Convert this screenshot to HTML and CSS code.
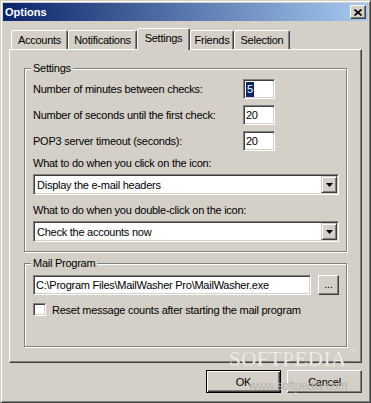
FILE: index.html
```html
<!DOCTYPE html>
<html lang="en">
<head>
  <meta charset="UTF-8" />
  <title>Options</title>
  <link rel="stylesheet" href="styles.css">
</head>
<body>
  <div class="window">
    <div class="titlebar">
      <span class="title">Options</span>
      <span class="close">
        <svg width="8" height="7" viewBox="0 0 8 7"><path d="M0.5 0.5L7.5 6.5M7.5 0.5L0.5 6.5" stroke="#000" stroke-width="1.6" fill="none"/></svg>
      </span>
    </div>

    <div class="body">
      <div class="tabs">
        <div class="tab w-accounts">Accounts</div>
        <div class="tab w-notify">Notifications</div>
        <div class="tab active w-settings">Settings</div>
        <div class="tab w-friends">Friends</div>
        <div class="tab w-selection">Selection</div>
      </div>

      <div class="panel">
        <div class="group settings">
          <span class="legend">Settings</span>

          <div class="row">
            <label>Number of minutes between checks:</label>
            <div class="field num"><span class="sel">5</span></div>
          </div>
          <div class="row">
            <label>Number of seconds until the first check:</label>
            <div class="field num">20</div>
          </div>
          <div class="row">
            <label>POP3 server timeout (seconds):</label>
            <div class="field num">20</div>
          </div>

          <div class="caption">What to do when you click on the icon:</div>
          <div class="field combo">
            <span class="combo-text">Display the e-mail headers</span>
            <span class="drop"><svg width="7" height="4" viewBox="0 0 7 4"><path d="M0 0H7L3.5 4Z" fill="#000"/></svg></span>
          </div>

          <div class="caption">What to do when you double-click on the icon:</div>
          <div class="field combo">
            <span class="combo-text">Check the accounts now</span>
            <span class="drop"><svg width="7" height="4" viewBox="0 0 7 4"><path d="M0 0H7L3.5 4Z" fill="#000"/></svg></span>
          </div>
        </div>

        <div class="group mail">
          <span class="legend">Mail Program</span>
          <div class="mail-row">
            <div class="field path">C:\Program Files\MailWasher Pro\MailWasher.exe</div>
            <div class="btn browse">...</div>
          </div>
          <div class="check-row">
            <span class="checkbox"></span>
            <span>Reset message counts after starting the mail program</span>
          </div>
        </div>
      </div>

      <div class="buttons">
        <div class="btn default">OK</div>
        <div class="btn">Cancel</div>
      </div>
    </div>

    <!-- watermark -->
    <div class="wm-big">SOFTPEDIA<span class="wm-tm">™</span></div>
    <div class="wm-small">www.softpedia.com</div>
  </div>
</body>
</html>
```

FILE: styles.css
```css
body {
  margin: 0;
  font-family: 'Liberation Sans', Arial, sans-serif;
  font-size: 11px;
  letter-spacing: -0.25px;
  color: #000;
  background: #d4d0c8;
}

.window {
  position: relative;
  width: 371px;
  height: 403px;
  box-sizing: border-box;
  padding: 2px;
  background: #d4d0c8;
  border: 1px solid;
  border-color: #d4d0c8 #404040 #404040 #d4d0c8;
  box-shadow: inset 1px 1px 0 #fff, inset -1px -1px 0 #808080;
}

.titlebar {
  height: 18px;
  display: flex;
  align-items: center;
  justify-content: space-between;
  padding: 0 2px;
  background: linear-gradient(to right, #0a246a, #a6caf0);
}

.title {
  color: #fff;
  font-weight: bold;
  letter-spacing: 0;
}

.close {
  width: 16px;
  height: 14px;
  box-sizing: border-box;
  display: flex;
  align-items: center;
  justify-content: center;
  background: #d4d0c8;
  border: 1px solid;
  border-color: #fff #404040 #404040 #fff;
  box-shadow: inset -1px -1px 0 #808080;
}

.body {
  padding: 7px 6px 0 6px;
}

/* tabs */
.tabs {
  display: flex;
  align-items: flex-end;
  height: 21px;
  padding-left: 2px;
}

.tab {
  box-sizing: border-box;
  height: 19px;
  padding-top: 3px;
  line-height: 13px;
  text-align: center;
  background: #d4d0c8;
  border: 1px solid;
  border-bottom: none;
  border-color: #fff #404040 transparent #fff;
  border-radius: 2px 2px 0 0;
  box-shadow: inset -1px 0 0 #808080;
}

.tab.active {
  position: relative;
  z-index: 1;
  height: 22px;
  margin-bottom: -1px;
}

.w-accounts { width: 57px; }
.w-notify { width: 69px; }
.w-settings { width: 53px; }
.w-friends { width: 44px; }
.w-selection { width: 56px; }

.panel {
  height: 314px;
  box-sizing: border-box;
  padding: 18px 14px 0 14px;
  border: 1px solid;
  border-color: #fff #404040 #404040 #fff;
  box-shadow: inset -1px -1px 0 #808080;
}

/* group boxes */
.group {
  position: relative;
  box-sizing: border-box;
  width: 323px;
  border: 1px solid #808080;
  box-shadow: inset 1px 1px 0 #fff, 1px 1px 0 #fff;
  padding: 10px 7px 0 8px;
}

.legend {
  position: absolute;
  top: -7px;
  left: 6px;
  padding: 0 2px;
  line-height: 13px;
  background: #d4d0c8;
}

.settings {
  height: 184px;
}

.mail {
  height: 84px;
  margin-top: 11px;
  padding-top: 11px;
}

.row {
  display: flex;
  align-items: center;
  height: 20px;
  margin-bottom: 6px;
}

.row label {
  width: 210px;
}

.field {
  box-sizing: border-box;
  height: 20px;
  display: flex;
  align-items: center;
  padding: 1px 1px 1px 2px;
  background: #fff;
  border: 1px solid;
  border-color: #808080 #fff #fff #808080;
  box-shadow: inset 1px 1px 0 #404040, inset -1px -1px 0 #d4d0c8;
  white-space: nowrap;
}

.num {
  width: 32px;
}

.sel {
  background: #0a246a;
  color: #fff;
  padding: 0 1px;
  line-height: 15px;
}

.caption {
  line-height: 13px;
  margin-top: 2px;
}

.combo {
  height: 21px;
  margin-top: 4px;
  margin-bottom: 9px;
  padding: 1px;
}

.combo-text {
  flex: 1;
  padding-left: 2px;
}

.drop {
  width: 16px;
  height: 17px;
  box-sizing: border-box;
  display: flex;
  align-items: center;
  justify-content: center;
  background: #d4d0c8;
  border: 1px solid;
  border-color: #d4d0c8 #404040 #404040 #d4d0c8;
  box-shadow: inset 1px 1px 0 #fff, inset -1px -1px 0 #808080;
}

.mail-row {
  display: flex;
  gap: 7px;
}

.path {
  width: 278px;
}

.btn {
  box-sizing: border-box;
  display: flex;
  align-items: center;
  justify-content: center;
  background: #d4d0c8;
  border: 1px solid;
  border-color: #fff #404040 #404040 #fff;
  box-shadow: inset -1px -1px 0 #808080;
}

.browse {
  width: 21px;
  height: 20px;
  padding-bottom: 2px;
}

.check-row {
  display: flex;
  align-items: center;
  gap: 6px;
  margin-top: 8px;
}

.checkbox {
  width: 13px;
  height: 13px;
  box-sizing: border-box;
  background: #fff;
  border: 1px solid;
  border-color: #808080 #fff #fff #808080;
  box-shadow: inset 1px 1px 0 #404040, inset -1px -1px 0 #d4d0c8;
}

.buttons {
  display: flex;
  justify-content: flex-end;
  gap: 6px;
  margin-top: 7px;
}

.buttons .btn {
  width: 75px;
  height: 23px;
}

.btn.default {
  border: 1px solid #000;
  box-shadow: inset 1px 1px 0 #fff, inset -1px -1px 0 #404040, inset -2px -2px 0 #808080;
}

/* softpedia watermark */
.wm-big {
  position: absolute;
  left: 228px;
  top: 346px;
  font-family: 'Liberation Serif', 'Times New Roman', serif;
  font-size: 21px;
  letter-spacing: 0.5px;
  color: #ecebe6;
  text-shadow: 0 0 1px #c4c0b8;
}

.wm-tm {
  font-size: 7px;
  vertical-align: 12px;
  margin-left: 2px;
}

.wm-small {
  position: absolute;
  left: 248px;
  top: 378px;
  font-size: 12px;
  letter-spacing: -0.3px;
  color: #b8b4ac;
}
```
